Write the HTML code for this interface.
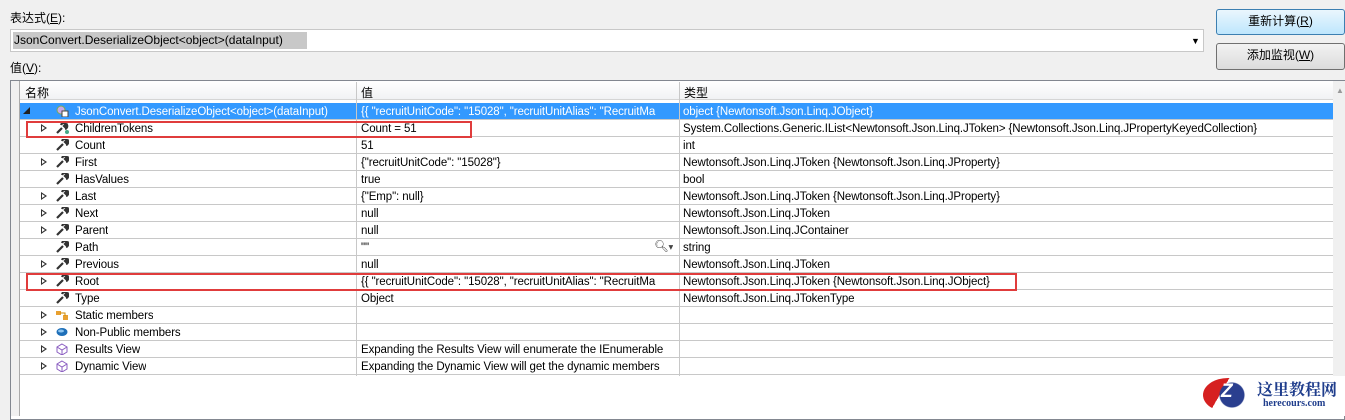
<!DOCTYPE html><html><head><meta charset="utf-8"><style>
*{margin:0;padding:0;box-sizing:border-box}
body{width:1345px;height:416px;background:#f0f0f0;font-family:"Liberation Sans","Noto Sans CJK SC",sans-serif;font-size:12px;color:#000;position:relative;overflow:hidden}
.a{position:absolute;white-space:nowrap}
.row{position:absolute;left:20px;width:1313px;height:17px;border-bottom:1px solid #c8c8c8;background:#fff;font-size:11.5px;letter-spacing:-0.1px}
.row span{position:absolute;top:2px;line-height:15px;overflow:hidden;white-space:nowrap}
.c1{left:55px}.c2{left:341px;width:318px}.c3{left:663px}
.sep{position:absolute;top:82px;width:1px;height:294px;background:#c8c8c8}
.tri{position:absolute;left:21px;top:4px;width:0;height:0;border-left:6px solid #333;border-top:4px solid transparent;border-bottom:4px solid transparent}
.tri:after{content:"";position:absolute;left:-5px;top:-2px;border-left:3px solid #fff;border-top:2px solid transparent;border-bottom:2px solid transparent}
.w{position:absolute;left:36px;top:2px;width:13px;height:12px}
.btn{position:absolute;border:1px solid #707070;border-radius:3px;text-align:center;line-height:23px;background:linear-gradient(#f2f2f2,#dcdcdc)}
</style></head><body>
<div class="a" style="left:10px;top:9px">表达式(<u>E</u>):</div>
<div class="a" style="left:10px;top:29px;width:1194px;height:23px;background:#fff;border:1px solid #c8c8c8"></div>
<div class="a" style="left:13px;top:32px;height:17px;width:294px;background:#c8c8c8;line-height:17px;padding-left:1px">JsonConvert.DeserializeObject&lt;object&gt;(dataInput)</div>
<div class="a" style="left:1191px;top:36px;font-size:9px">▼</div>
<div class="a" style="left:10px;top:59px">值(<u>V</u>):</div>
<div class="btn" style="left:1216px;top:9px;width:129px;height:26px;border-color:#3c7fb1;background:linear-gradient(#eaf6fd,#bee6fd)">重新计算(<u>R</u>)</div>
<div class="btn" style="left:1216px;top:43px;width:129px;height:27px">添加监视(<u>W</u>)</div>
<div class="a" style="left:10px;top:80px;width:1335px;height:340px;background:#fff;border:1px solid #828790"></div>
<div class="a" style="left:11px;top:81px;width:9px;height:335px;background:#f0f0f0;border-right:1px solid #aaa"></div>
<div class="a" style="left:1333px;top:81px;width:12px;height:335px;background:#f0f0f0"></div>
<div class="a" style="left:1336px;top:86px;font-size:8px;color:#999">▲</div>
<div class="a" style="left:20px;top:81px;width:1313px;height:19px;background:linear-gradient(#fff,#f1f2f4);border-bottom:1px solid #d5d5d5"></div>
<div class="a" style="left:25px;top:84px">名称</div><div class="a" style="left:361px;top:84px">值</div><div class="a" style="left:684px;top:84px">类型</div>

<div class="row" style="top:103px;background:#3399ff;color:#fff"><div class="a" style="left:3px;top:4px;border-left:7px solid transparent;border-bottom:7px solid #222;width:0"></div><svg class="w" viewBox="0 0 13 12"><circle cx="5" cy="5" r="4" fill="#c7a9e8" stroke="#7a5"/><rect x="6" y="6" width="6" height="6" fill="#fff" stroke="#444"/></svg><span class="c1" style="color:#fff">JsonConvert.DeserializeObject&lt;object&gt;(dataInput)</span><span class="c2" style="color:#fff">{{  "recruitUnitCode": "15028",  "recruitUnitAlias": "RecruitMa</span><span class="c3" style="color:#fff">object {Newtonsoft.Json.Linq.JObject}</span></div>

<div class="row" style="top:120px"><div class="tri"></div><svg class="w" viewBox="0 0 13 12"><path d="M1 11L6 6M5 3a3 3 0 0 1 5-1l-2 2 1 1 2-2a3 3 0 0 1-2 4" stroke="#333" stroke-width="2.2" fill="none"/><circle cx="11" cy="10" r="2" fill="#4a8"/></svg><span class="c1">ChildrenTokens</span><span class="c2">Count = 51</span><span class="c3">System.Collections.Generic.IList&lt;Newtonsoft.Json.Linq.JToken&gt; {Newtonsoft.Json.Linq.JPropertyKeyedCollection}</span></div>
<div class="row" style="top:137px"><svg class="w" viewBox="0 0 13 12"><path d="M1 11L7 5M6 2a3 3 0 0 1 5-1l-2 2 1 1 2-2a3 3 0 0 1-2 4" stroke="#333" stroke-width="2.2" fill="none"/></svg><span class="c1">Count</span><span class="c2">51</span><span class="c3">int</span></div>
<div class="row" style="top:154px"><div class="tri"></div><svg class="w" viewBox="0 0 13 12"><path d="M1 11L7 5M6 2a3 3 0 0 1 5-1l-2 2 1 1 2-2a3 3 0 0 1-2 4" stroke="#333" stroke-width="2.2" fill="none"/></svg><span class="c1">First</span><span class="c2">{"recruitUnitCode": "15028"}</span><span class="c3">Newtonsoft.Json.Linq.JToken {Newtonsoft.Json.Linq.JProperty}</span></div>
<div class="row" style="top:171px"><svg class="w" viewBox="0 0 13 12"><path d="M1 11L7 5M6 2a3 3 0 0 1 5-1l-2 2 1 1 2-2a3 3 0 0 1-2 4" stroke="#333" stroke-width="2.2" fill="none"/></svg><span class="c1">HasValues</span><span class="c2">true</span><span class="c3">bool</span></div>
<div class="row" style="top:188px"><div class="tri"></div><svg class="w" viewBox="0 0 13 12"><path d="M1 11L7 5M6 2a3 3 0 0 1 5-1l-2 2 1 1 2-2a3 3 0 0 1-2 4" stroke="#333" stroke-width="2.2" fill="none"/></svg><span class="c1">Last</span><span class="c2">{"Emp": null}</span><span class="c3">Newtonsoft.Json.Linq.JToken {Newtonsoft.Json.Linq.JProperty}</span></div>
<div class="row" style="top:205px"><div class="tri"></div><svg class="w" viewBox="0 0 13 12"><path d="M1 11L7 5M6 2a3 3 0 0 1 5-1l-2 2 1 1 2-2a3 3 0 0 1-2 4" stroke="#333" stroke-width="2.2" fill="none"/></svg><span class="c1">Next</span><span class="c2">null</span><span class="c3">Newtonsoft.Json.Linq.JToken</span></div>
<div class="row" style="top:222px"><div class="tri"></div><svg class="w" viewBox="0 0 13 12"><path d="M1 11L7 5M6 2a3 3 0 0 1 5-1l-2 2 1 1 2-2a3 3 0 0 1-2 4" stroke="#333" stroke-width="2.2" fill="none"/></svg><span class="c1">Parent</span><span class="c2">null</span><span class="c3">Newtonsoft.Json.Linq.JContainer</span></div>
<div class="row" style="top:239px"><svg class="w" viewBox="0 0 13 12"><path d="M1 11L7 5M6 2a3 3 0 0 1 5-1l-2 2 1 1 2-2a3 3 0 0 1-2 4" stroke="#333" stroke-width="2.2" fill="none"/></svg><span class="c1">Path</span><span class="c2">""</span><span class="a" style="left:634px;top:1px;color:#444">🔍︎<small>▾</small></span><span class="c3">string</span></div>
<div class="row" style="top:256px"><div class="tri"></div><svg class="w" viewBox="0 0 13 12"><path d="M1 11L7 5M6 2a3 3 0 0 1 5-1l-2 2 1 1 2-2a3 3 0 0 1-2 4" stroke="#333" stroke-width="2.2" fill="none"/></svg><span class="c1">Previous</span><span class="c2">null</span><span class="c3">Newtonsoft.Json.Linq.JToken</span></div>
<div class="row" style="top:273px"><div class="tri"></div><svg class="w" viewBox="0 0 13 12"><path d="M1 11L7 5M6 2a3 3 0 0 1 5-1l-2 2 1 1 2-2a3 3 0 0 1-2 4" stroke="#333" stroke-width="2.2" fill="none"/></svg><span class="c1">Root</span><span class="c2">{{  "recruitUnitCode": "15028",  "recruitUnitAlias": "RecruitMa</span><span class="c3">Newtonsoft.Json.Linq.JToken {Newtonsoft.Json.Linq.JObject}</span></div>
<div class="row" style="top:290px"><svg class="w" viewBox="0 0 13 12"><path d="M1 11L7 5M6 2a3 3 0 0 1 5-1l-2 2 1 1 2-2a3 3 0 0 1-2 4" stroke="#333" stroke-width="2.2" fill="none"/></svg><span class="c1">Type</span><span class="c2">Object</span><span class="c3">Newtonsoft.Json.Linq.JTokenType</span></div>
<div class="row" style="top:307px"><div class="tri"></div><svg class="w" viewBox="0 0 13 12"><rect x="0" y="2" width="5" height="4" fill="#e8a030"/><rect x="7" y="6" width="5" height="5" fill="#e8a030"/><path d="M4 4h5v3" stroke="#c80" fill="none"/></svg><span class="c1">Static members</span><span class="c2"></span><span class="c3"></span></div>
<div class="row" style="top:324px"><div class="tri"></div><svg class="w" viewBox="0 0 13 12"><ellipse cx="6" cy="6" rx="5.5" ry="4" fill="#1e6fb8"/><ellipse cx="5" cy="5" rx="3" ry="1.5" fill="#8cc4f0"/></svg><span class="c1">Non-Public members</span></div>
<div class="row" style="top:341px"><div class="tri"></div><svg class="w" viewBox="0 0 13 12"><path d="M6 1l5 3v5l-5 3-5-3V4z M1 4l5 3 5-3 M6 7v5" stroke="#8a5cc0" fill="none"/></svg><span class="c1">Results View</span><span class="c2">Expanding the Results View will enumerate the IEnumerable</span></div>
<div class="row" style="top:358px"><div class="tri"></div><svg class="w" viewBox="0 0 13 12"><path d="M6 1l5 3v5l-5 3-5-3V4z M1 4l5 3 5-3 M6 7v5" stroke="#8a5cc0" fill="none"/></svg><span class="c1">Dynamic View</span><span class="c2">Expanding the Dynamic View will get the dynamic members</span></div>
<div class="sep" style="left:356px"></div><div class="sep" style="left:679px"></div>

<div class="a" style="left:26px;top:121px;width:446px;height:17px;border:2px solid #e03c3c"></div>
<div class="a" style="left:26px;top:273px;width:991px;height:18px;border:2px solid #e03c3c"></div>

<div class="a" style="left:1198px;top:376px;width:147px;height:40px;background:#fff"></div>
<div class="a" style="left:1203px;top:378px;width:50px;height:34px;border-radius:50%;background:radial-gradient(circle at 58% 50%,#2a3f8f 0 12px,transparent 13px),linear-gradient(120deg,#d62020 0 38%,#fff 38%)"></div>
<div class="a" style="left:1221px;top:381px;color:#fff;font-weight:bold;font-size:19px;font-style:italic">Z</div>
<div class="a" style="left:1257px;top:377px;color:#1f3d8c;font-weight:bold;font-size:16px;font-family:'Noto Serif CJK SC',serif">这里教程网</div>
<div class="a" style="left:1263px;top:398px;color:#1f3d8c;font-weight:bold;font-size:10px;font-family:'Liberation Serif',serif">herecours.com</div>
</body></html>
